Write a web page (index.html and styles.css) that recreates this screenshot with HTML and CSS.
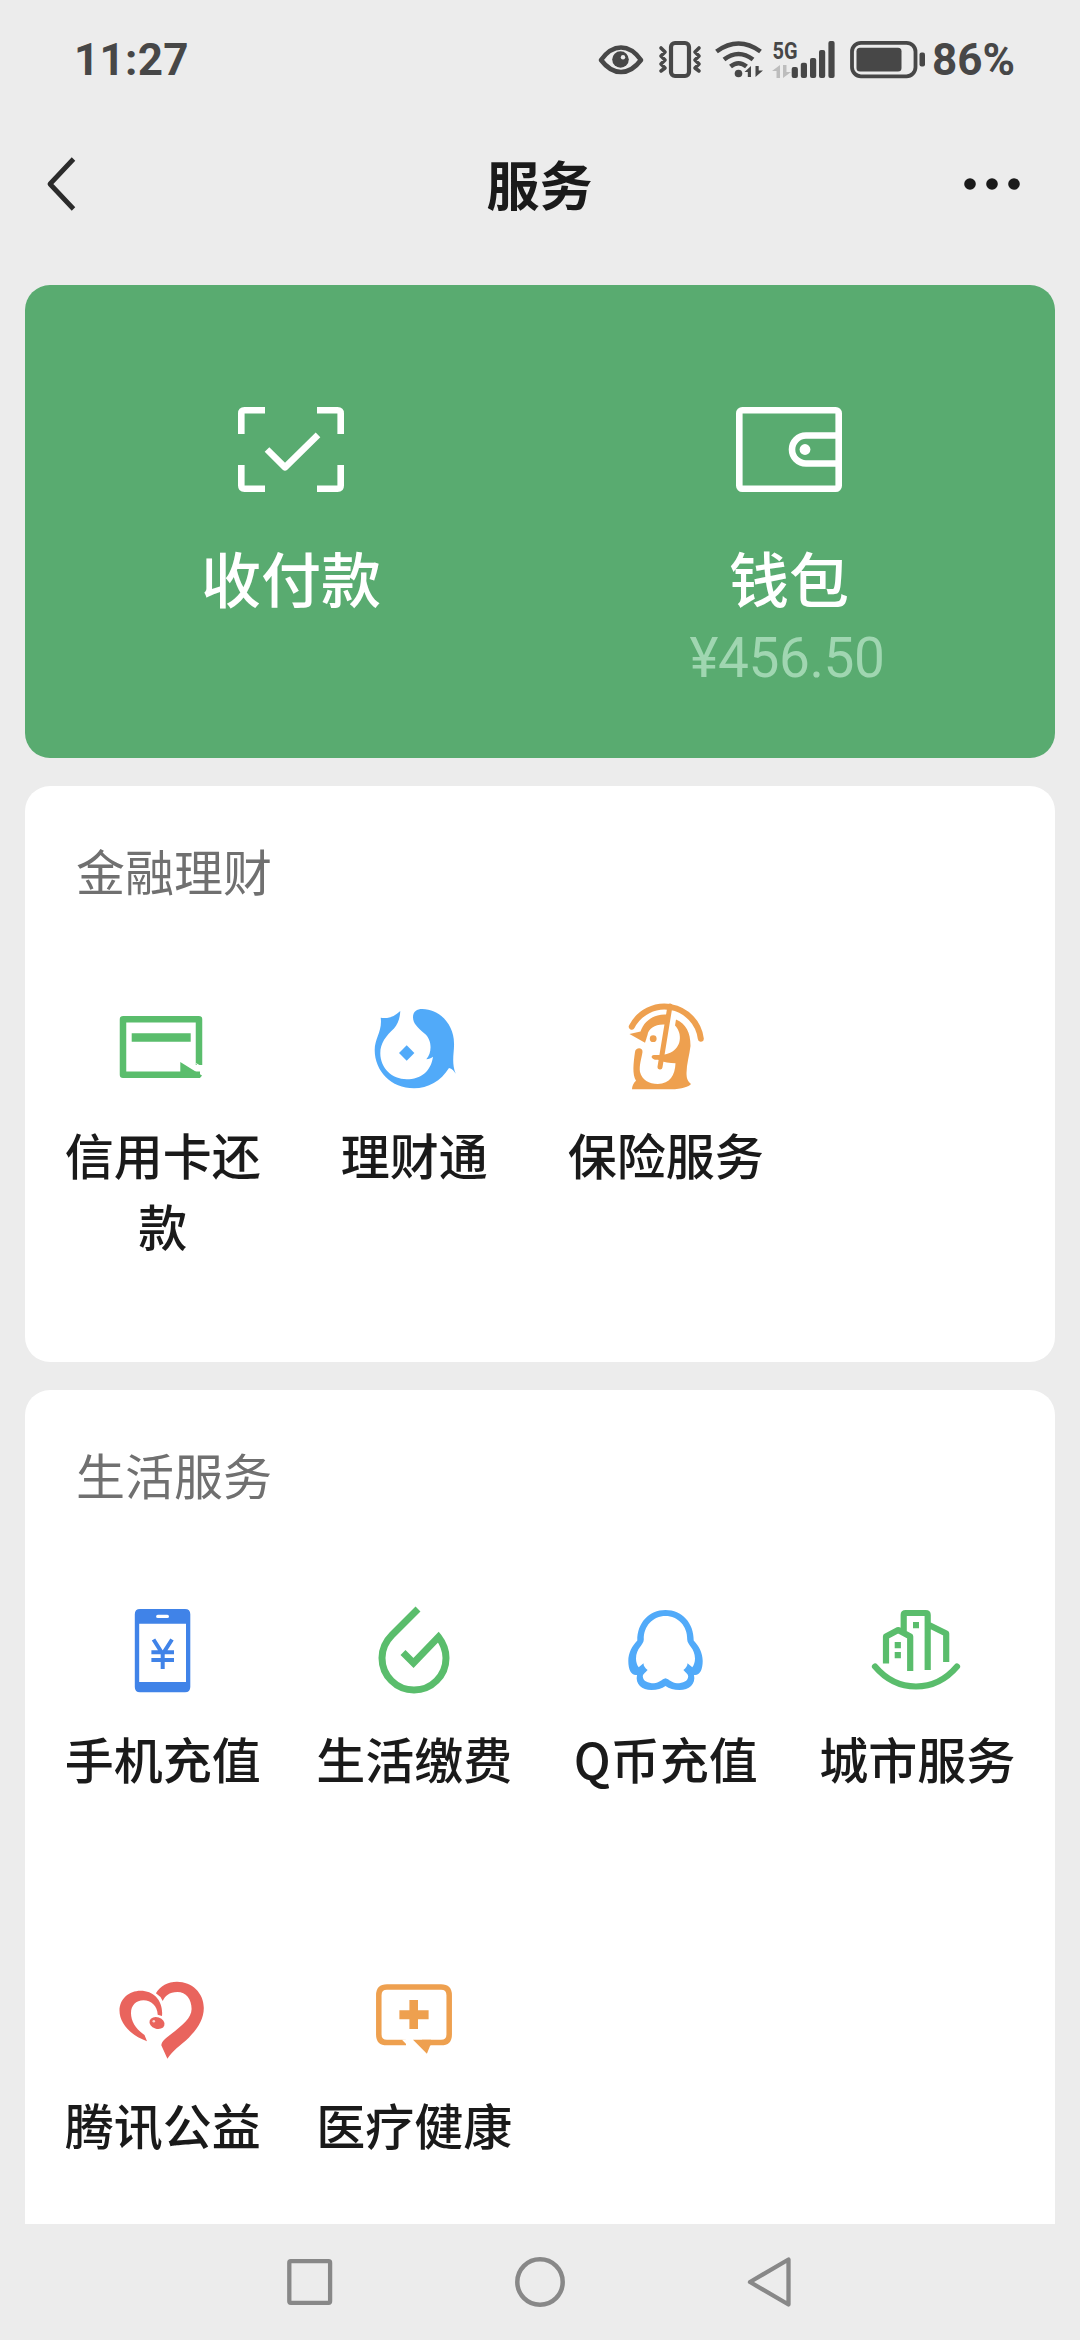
FILE: index.html
```html
<!DOCTYPE html>
<html lang="zh-CN">
<head>
<meta charset="utf-8">
<title>服务</title>
<link rel="stylesheet" href="styles.css">
</head>
<body>
<div class="screen">
  <header class="status">
    <span class="status-time">11:27</span>
    <div class="status-icons">
      <svg class="ic-eye" width="46" height="40" viewBox="0 0 46 40"><path d="M3 20Q12 7.500 23 7.500T43 20Q34 32 23 32T3 20Z" fill="none" stroke="#474747" stroke-width="4.600" stroke-linejoin="round"/><circle cx="22.500" cy="19.500" r="8.300" fill="#474747"/><circle cx="25" cy="17.300" r="2.200" fill="#ececec"/></svg>
      <svg class="ic-vibrate" width="44" height="40" viewBox="0 0 44 40"><g fill="none" stroke="#474747"><rect x="13" y="3" width="18" height="33" rx="4" stroke-width="4.200"/><path d="M3 8l4 4-4 4 4 4-4 4 4 4-4 3M41 8l-4 4 4 4-4 4 4 4-4 4 4 3" stroke-width="3.600" stroke-linejoin="round" stroke-linecap="round"/></g></svg>
      <svg class="ic-wifi" width="48" height="40" viewBox="0 0 48 40"><g fill="none" stroke="#474747" stroke-width="4.600"><path d="M1.500 11.500Q23.500-4.500 45.500 11.500M9 19.500Q23.500 8.500 38 19.500M15.500 26.500Q23.500 20 31.500 26.500"/></g><circle cx="23.500" cy="33.500" r="3.800" fill="#474747"/><path d="M29.500 32l6.500-6v11h-3.200v-5zM48 30.500l-7.500 6.500V26h3.200v4.500z" fill="#474747"/></svg>
      <svg class="ic-signal" width="65" height="40" viewBox="0 0 65 40"><text class="network" x="1.500" y="18.700" textLength="25" lengthAdjust="spacingAndGlyphs">5G</text><path d="M1 31l8-6v13H5.500v-7zM20 32l-8 6V25h3.500v7z" fill="#bdbdbd"/><g fill="#474747"><rect x="20.700" y="27" width="6.200" height="11" rx="2"/><rect x="29.800" y="22.700" width="6.200" height="15.300" rx="2"/><rect x="39" y="18" width="6.200" height="20" rx="2"/><rect x="48" y="10" width="6.200" height="28" rx="2"/><rect x="57.400" y="1" width="6.200" height="37" rx="2"/></g></svg>
      <svg class="ic-battery" width="77" height="40" viewBox="0 0 77 40"><rect x="2" y="2.800" width="63.500" height="33.500" rx="9" fill="none" stroke="#474747" stroke-width="3.800"/><rect x="6.500" y="7.700" width="45" height="23.700" rx="3.500" fill="#474747"/><rect x="69.500" y="12.500" width="5.500" height="14" rx="2" fill="#474747"/></svg>
      <span class="status-battery">86%</span>
    </div>
  </header>

  <nav class="titlebar">
    <svg class="back" width="32" height="60" viewBox="0 0 32 60"><path d="M28.500 5L5 30l23.500 25" fill="none" stroke="#2b2b2b" stroke-width="4.800" stroke-linejoin="round"/></svg>
    <h1 class="title">服务</h1>
    <svg class="more" width="60" height="14" viewBox="0 0 60 14"><g fill="#1a1a1a"><circle cx="8" cy="7" r="5.800"/><circle cx="30" cy="7" r="5.800"/><circle cx="52" cy="7" r="5.800"/></g></svg>
  </nav>

  <main class="content">
    <section class="pay">
      <div class="pay-item">
        <svg width="106" height="86" viewBox="0 0 106 86"><g fill="none" stroke="#fff" stroke-width="6.600"><path d="M3.300 27V6.500Q3.300 3.300 6.500 3.300H27M79 3.300h20.500q3.200 0 3.200 3.200V27M102.700 58v20.500q0 3.200-3.200 3.200H79M27 81.700H6.500q-3.200 0-3.200-3.200V58"/><path d="M29 42.500l18 17.800 33-32.500" stroke-linejoin="round"/></g></svg>
        <span class="pay-label">收付款</span>
      </div>
      <div class="pay-item">
        <svg width="106" height="86" viewBox="0 0 106 86"><g fill="none" stroke="#fff" stroke-width="6.600"><rect x="3.300" y="3.300" width="99.400" height="78.400" rx="3"/><path d="M102 28.500H70a14 14 0 0 0 0 28h32"/></g><circle cx="69" cy="42.500" r="5.400" fill="#fff"/></svg>
        <span class="pay-label">钱包</span>
        <span class="balance">¥456.50</span>
      </div>
    </section>

    <section class="card card-finance">
      <h2 class="card-title">金融理财</h2>
      <div class="grid">
        <div class="tile">
          <svg class="tile-icon" viewBox="0 0 100 100"><path d="M86 69V23.300H10v55.500h77" fill="none" stroke="#5abd6c" stroke-width="6.500" stroke-linejoin="round"/><path d="M18.700 37.200h59v8.600h-59zM67.300 66L89 79.500q-1 2.500-4 2.500H67.300z" fill="#5abd6c"/><path d="M82 66.500l8 4.500v5z" fill="#fff"/></svg>
          <span class="tile-label">信用卡还款</span>
        </div>
        <div class="tile">
          <svg class="tile-icon" viewBox="0 0 100 100"><path d="M16.700 21.700C24 23 30 21 36.300 15C36 22 34 28 30 32.500C22 40 16.300 47 16.300 57.300C16.300 72 28 83.300 42.700 83.300C57 83.300 67 75 69 60.700C67 62 65 63 62.300 63.300C68 57 68.500 44 60.500 37.500C54 32 49 27.500 49 21.300C49 15.500 53 13 58.300 13C76 13 90 29 90 47C90.500 56 87 66 91.700 77.700C90 75 88 72.500 85 72C77 85 64 92.300 50 92.300C27 92.300 10.700 75 10.700 54C10.700 42 18.500 35 16.700 21.700Z" fill="#51aaf9"/><path d="M42.700 49.300l7.700 7.700-7.700 7.700L35 57z" fill="#51aaf9"/></svg>
          <span class="tile-label">理财通</span>
        </div>
        <div class="tile">
          <svg class="tile-icon" viewBox="0 0 100 100"><path d="M15.800 30.700A36.600 36.600 0 0 1 84.800 42.700" fill="none" stroke="#eea04f" stroke-width="6" stroke-linecap="round"/><path d="M54 10L44 71" fill="none" stroke="#eea04f" stroke-width="5" stroke-linecap="round"/><g fill="#eea04f"><path d="M13.500 38L24.500 35.500C28 25 38 17.500 51.500 18.700L50 28.600C40 27.500 32.500 32 31.500 39C30.500 42 30 44 29 46.700Z"/><circle cx="37.200" cy="42.700" r="3.400"/><path d="M60 23.500C70 28 74.500 36 74.500 50C73.500 59 70.500 68 70.500 77C70.500 83 72 85.500 75 88C73 90.500 66 93.300 55 93.300H16C16 90 17.500 87 20 84.700C16 78 17.500 67 19 56C19.500 51 27 51 26.500 56C25.500 63 23 69 24 76C26 84 33 88 41.800 88C54 88 59 79 59.500 67.300C54 67.300 48 66.500 42 63.800C35 64.500 34 59 38 59C46 59 52 58.500 56.500 55.500C66.500 49 65.500 36 59 29.500Z"/></g></svg>
          <span class="tile-label">保险服务</span>
        </div>
      </div>
    </section>

    <section class="card card-life">
      <h2 class="card-title">生活服务</h2>
      <div class="grid">
        <div class="tile">
          <svg class="tile-icon" viewBox="0 0 100 100"><path d="M27 9h45q5.300 0 5.300 5.300V87q0 5.300-5.300 5.300H27q-5.200 0-5.200-5.300V14.300Q21.800 9 27 9zM26.200 23.700V82H73V23.700zM44.800 14.700a1.700 1.700 0 0 0 0 3.400h9.500a1.700 1.700 0 0 0 0-3.400z" fill="#4083e8" fill-rule="evenodd"/><path d="M40.500 39.500l9.200 14.500L59 39.500M38.400 52.300H61M38.400 60H61M49.700 53v16" fill="none" stroke="#4083e8" stroke-width="4"/></svg>
          <span class="tile-label">手机充值</span>
        </div>
        <div class="tile">
          <svg class="tile-icon" viewBox="0 0 100 100"><path d="M54 9L28 35C22 41 18 49 18 58a32 32 0 0 0 64 0C82 50 79 43 74.400 37L49.500 63 39 52.500" fill="none" stroke="#5abd6c" stroke-width="7"/></svg>
          <span class="tile-label">生活缴费</span>
        </div>
        <div class="tile">
          <svg class="tile-icon" viewBox="0 0 100 100"><path fill="#51aaf9" fill-rule="evenodd" d="M49.500 10C33 10 21 23 21.300 40.500C16 46 12.300 53 12.300 61C12.300 70 15.500 76 21 75C19 84 26 90 35.400 90C41 90 46 88.500 49.500 86C53 88.500 58 90 63.600 90C73 90 80 84 78 75C83.500 76 86.700 70 86.700 61C86.700 53 83 46 77.700 40.500C78 23 66 10 49.500 10ZM49.500 16C62 16 71.500 26 71.200 39.500C71.200 45 79 48 79 58.500C79 62 78 65 76.300 67.300L71.500 63.300C71.500 66 70 68 67.400 70C70 73 72.200 74 72.200 76.500C72 81 67 83.300 61 83.300C56 83.300 53 79 49.500 78.300C46 79 43 83.300 38 83.300C32 83.300 27 81 26.800 76.500C26.800 74 29 73 31.600 70C29 68 27.500 66 27.500 63.300L22.700 67.300C21 65 20 62 20 58.500C20 48 27.800 45 27.800 39.500C27.500 26 37 16 49.500 16Z"/></svg>
          <span class="tile-label">Q币充值</span>
        </div>
        <div class="tile">
          <svg class="tile-icon" viewBox="0 0 100 100"><g fill="none" stroke="#5abd6c" stroke-width="6.200" stroke-linejoin="round"><path d="M8 66.500Q25 86.500 49 86.500T90 66.500" stroke-linecap="round"/><path d="M19 63.500V36.500l12.200-6.500 12 6.500V71M36.700 32V15q0-2 2-2h20q2 0 2 2v55M62 25l17.200 8.500V62"/></g><path d="M27.700 42h6.200v6.300h-6.200zM27.700 52h6.200v6.300h-6.200zM46 22h6v6.300h-6z" fill="#5abd6c"/></svg>
          <span class="tile-label">城市服务</span>
        </div>
        <div class="tile">
          <svg class="tile-icon" viewBox="0 0 100 100"><g fill="#e9645d"><path d="M34 75.300C17 69 6.500 57 6.500 44.500C6.500 33 16 24.700 27.600 24.700C41 24.700 50.500 35 49 50L44.700 48.700C44.500 40 38 34.300 30.500 34.300C23 34.300 18 39.500 18 47C18 56 23 63 31.500 69Z"/><path d="M42.900 27.300C47 20 55 15.700 64 15.700C79 15.700 90.800 27 90.800 42C90.800 54 84 63 75.800 71.700C67 80 60 84 54.400 92.700L48.300 79.300C49 75 51.500 73.500 55 70.500C67 61 78.600 53 78.600 43C78.600 33 73 26 64.500 26C56 26 52 30 49.700 35Q47.500 30 42.900 27.300Z"/><ellipse cx="44" cy="57" rx="7.700" ry="5.700" transform="rotate(18 44 57)"/></g><circle cx="40.800" cy="55.200" r="1.300" fill="#fbd5d2"/></svg>
          <span class="tile-label">腾讯公益</span>
        </div>
        <div class="tile">
          <svg class="tile-icon" viewBox="0 0 100 100"><path d="M42 76.600H23q-8.200 0-8.200-8.200V29.300q0-8.200 8.200-8.200h54q8.200 0 8.200 8.200v39.100q0 8.200-8.200 8.200H58" fill="none" stroke="#eea04f" stroke-width="5.500"/><path d="M38 73.800l5.800 6V73z" fill="#fff"/><path d="M49 73.800h18v5.500h-.7l-3.400 8.400zM45.400 34H54v10.300h10.600v9H54V63h-8.600v-9.700h-10v-9h10z" fill="#eea04f"/></svg>
          <span class="tile-label">医疗健康</span>
        </div>
      </div>
    </section>
  </main>

  <footer class="sysnav">
    <svg width="50" height="52" viewBox="0 0 50 52"><rect x="4.300" y="5.200" width="40.800" height="41.600" rx="1.500" fill="none" stroke="#888" stroke-width="4.300"/></svg>
    <svg width="50" height="52" viewBox="0 0 50 52"><circle cx="25" cy="26" r="22.700" fill="none" stroke="#888" stroke-width="4.500"/></svg>
    <svg width="50" height="52" viewBox="0 0 50 52"><path d="M42.500 3.500v45L4 26z" fill="none" stroke="#888" stroke-width="4.300" stroke-linejoin="round"/></svg>
  </footer>
</div>
</body>
</html>
```
FILE: styles.css
```css
* {
  box-sizing: border-box;
  margin: 0;
  padding: 0;
}

body {
  background: #ececec;
  color: #1a1a1a;
  font-family: "Noto Sans CJK SC", sans-serif;
}

svg {
  display: block;
  flex: none;
}

.screen {
  width: 1080px;
  height: 2340px;
  display: flex;
  flex-direction: column;
  overflow: hidden;
  background: #ececec;
}

.status {
  height: 120px;
  display: flex;
  justify-content: space-between;
  align-items: center;
  padding: 0 65px 0 74px;
  color: #474747;
  font-family: Roboto, sans-serif;
  font-weight: 700;
  font-size: 44px;
}

.status-time {
  letter-spacing: 0.3px;
}

.status-icons {
  display: flex;
  align-items: center;
}

.ic-eye { margin-right: 14px; }
.ic-vibrate { margin-right: 13px; }
.ic-wifi { margin-right: 8px; }
.ic-signal { margin-right: 14px; }
.ic-battery { margin-right: 5px; }

.network {
  font: 700 24px Roboto, sans-serif;
  fill: #474747;
}

.titlebar {
  height: 128px;
  display: grid;
  grid-template-columns: 1fr auto 1fr;
  align-items: center;
  padding: 0 58px 0 45px;
}

.title {
  font-size: 53px;
  font-weight: 700;
  line-height: 74px;
  margin: 0 -6px 3px 6px;
}

.more {
  justify-self: end;
}

.content {
  flex: none;
  height: 1976px;
  padding: 37px 25px 0;
  display: flex;
  flex-direction: column;
  gap: 28px;
  overflow: hidden;
}

.pay {
  flex: none;
  height: 472.500px;
  padding: 122px 17px 0;
  display: grid;
  grid-template-columns: 1fr 1fr;
  border-radius: 25px;
  background: #59ab70;
  color: #fff;
}

.pay-item {
  display: flex;
  flex-direction: column;
  align-items: center;
}

.pay-label {
  margin-top: 44px;
  font-size: 60px;
  font-weight: 500;
  line-height: 80px;
}

.balance {
  margin: 9px 4px 0 0;
  font-family: Roboto, sans-serif;
  font-size: 55px;
  letter-spacing: -0.4px;
  line-height: 64px;
  color: #a0d6b1;
}

.card {
  flex: none;
  padding: 49px 12px 0;
  border-radius: 25px;
  background: #fff;
}

.card-finance {
  height: 576px;
}

.card-life {
  height: 900px;
}

.card-title {
  padding-left: 39px;
  font-size: 49px;
  font-weight: 400;
  line-height: 70px;
  color: #707070;
}

.grid {
  display: grid;
  grid-template-columns: repeat(4, 251.500px);
  grid-auto-rows: 366.700px;
  padding-top: 91px;
}

.tile {
  display: flex;
  flex-direction: column;
  align-items: center;
}

.tile-icon {
  width: 100px;
  height: 100px;
}

.tile-label {
  width: 200px;
  margin-top: 22px;
  font-size: 49px;
  font-weight: 500;
  line-height: 71px;
  text-align: center;
}

.sysnav {
  height: 116px;
  display: flex;
  justify-content: center;
  gap: 180.500px;
  padding-top: 32px;
}
```
